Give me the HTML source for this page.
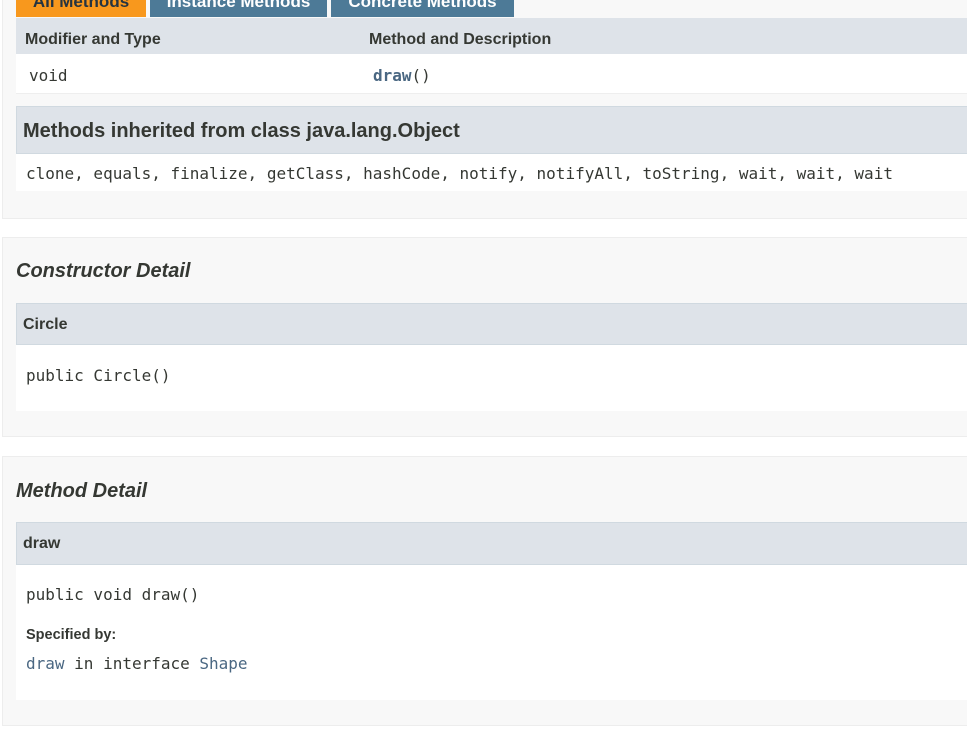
<!DOCTYPE html>
<html><head><style>
body{margin:0;width:967px;height:732px;overflow:hidden;background:#fff;position:relative;font-family:"Liberation Sans",Arial,sans-serif;color:#353833}
.a{position:absolute}
.m{font-family:"DejaVu Sans Mono","Liberation Mono",monospace;font-size:16px;white-space:nowrap}
.blk{position:absolute;left:2px;width:980px;background:#f8f8f8;border:1px solid #ededed}
.hd{position:absolute;left:16px;width:960px;background:#dee3e9;border:1px solid #d0d9e0;box-sizing:border-box}
.wh{position:absolute;left:16px;width:960px;background:#fff}
.b{font-weight:bold;white-space:nowrap}
.lk{color:#4a6782}
</style></head><body>
<div class="blk" style="top:-10px;height:227px"></div>
<div class="a b" style="left:16px;top:-10px;width:130px;height:27px;background:#f8981d;color:#253441;font-size:17px;text-align:center;line-height:23px;overflow:hidden">All Methods</div>
<div class="a b" style="left:150px;top:-10px;width:177px;height:27px;background:#4d7a97;color:#fff;font-size:17px;text-align:center;line-height:23px;overflow:hidden">Instance Methods</div>
<div class="a b" style="left:331px;top:-10px;width:183px;height:27px;background:#4d7a97;color:#fff;font-size:17px;text-align:center;line-height:23px;overflow:hidden">Concrete Methods</div>
<div class="a" style="left:16px;top:18px;width:960px;height:36px;background:#dee3e9"></div>
<div class="a b" style="left:25px;top:31px;font-size:16px">Modifier and Type</div>
<div class="a b" style="left:369px;top:31px;font-size:16px">Method and Description</div>
<div class="wh" style="top:54px;height:39px;border-bottom:1px solid #eee"></div>
<div class="a m" style="left:29px;top:66px">void</div>
<div class="a m" style="left:373px;top:66px"><span class="lk" style="font-weight:bold">draw</span>()</div>
<div class="hd" style="top:106px;height:48px"></div>
<div class="a b" style="left:23px;top:120px;font-size:20px">Methods inherited from class java.lang.Object</div>
<div class="wh" style="top:154px;height:37px"></div>
<div class="a m" style="left:26px;top:164px">clone, equals, finalize, getClass, hashCode, notify, notifyAll, toString, wait, wait, wait</div>

<div class="blk" style="top:237px;height:198px"></div>
<div class="a b" style="left:16px;top:260px;font-size:20px;font-style:italic">Constructor Detail</div>
<div class="hd" style="top:303px;height:42px"></div>
<div class="a b" style="left:23px;top:316px;font-size:16px">Circle</div>
<div class="wh" style="top:345px;height:66px"></div>
<div class="a m" style="left:26px;top:366px">public Circle()</div>

<div class="blk" style="top:456px;height:268px"></div>
<div class="a b" style="left:16px;top:480px;font-size:20px;font-style:italic">Method Detail</div>
<div class="hd" style="top:522px;height:43px"></div>
<div class="a b" style="left:23px;top:535px;font-size:16px">draw</div>
<div class="wh" style="top:565px;height:135px"></div>
<div class="a m" style="left:26px;top:585px">public void draw()</div>
<div class="a b" style="left:26px;top:627px;font-size:14.5px">Specified by:</div>
<div class="a m" style="left:26px;top:654px"><span class="lk">draw</span> in interface <span class="lk">Shape</span></div>
</body></html>
